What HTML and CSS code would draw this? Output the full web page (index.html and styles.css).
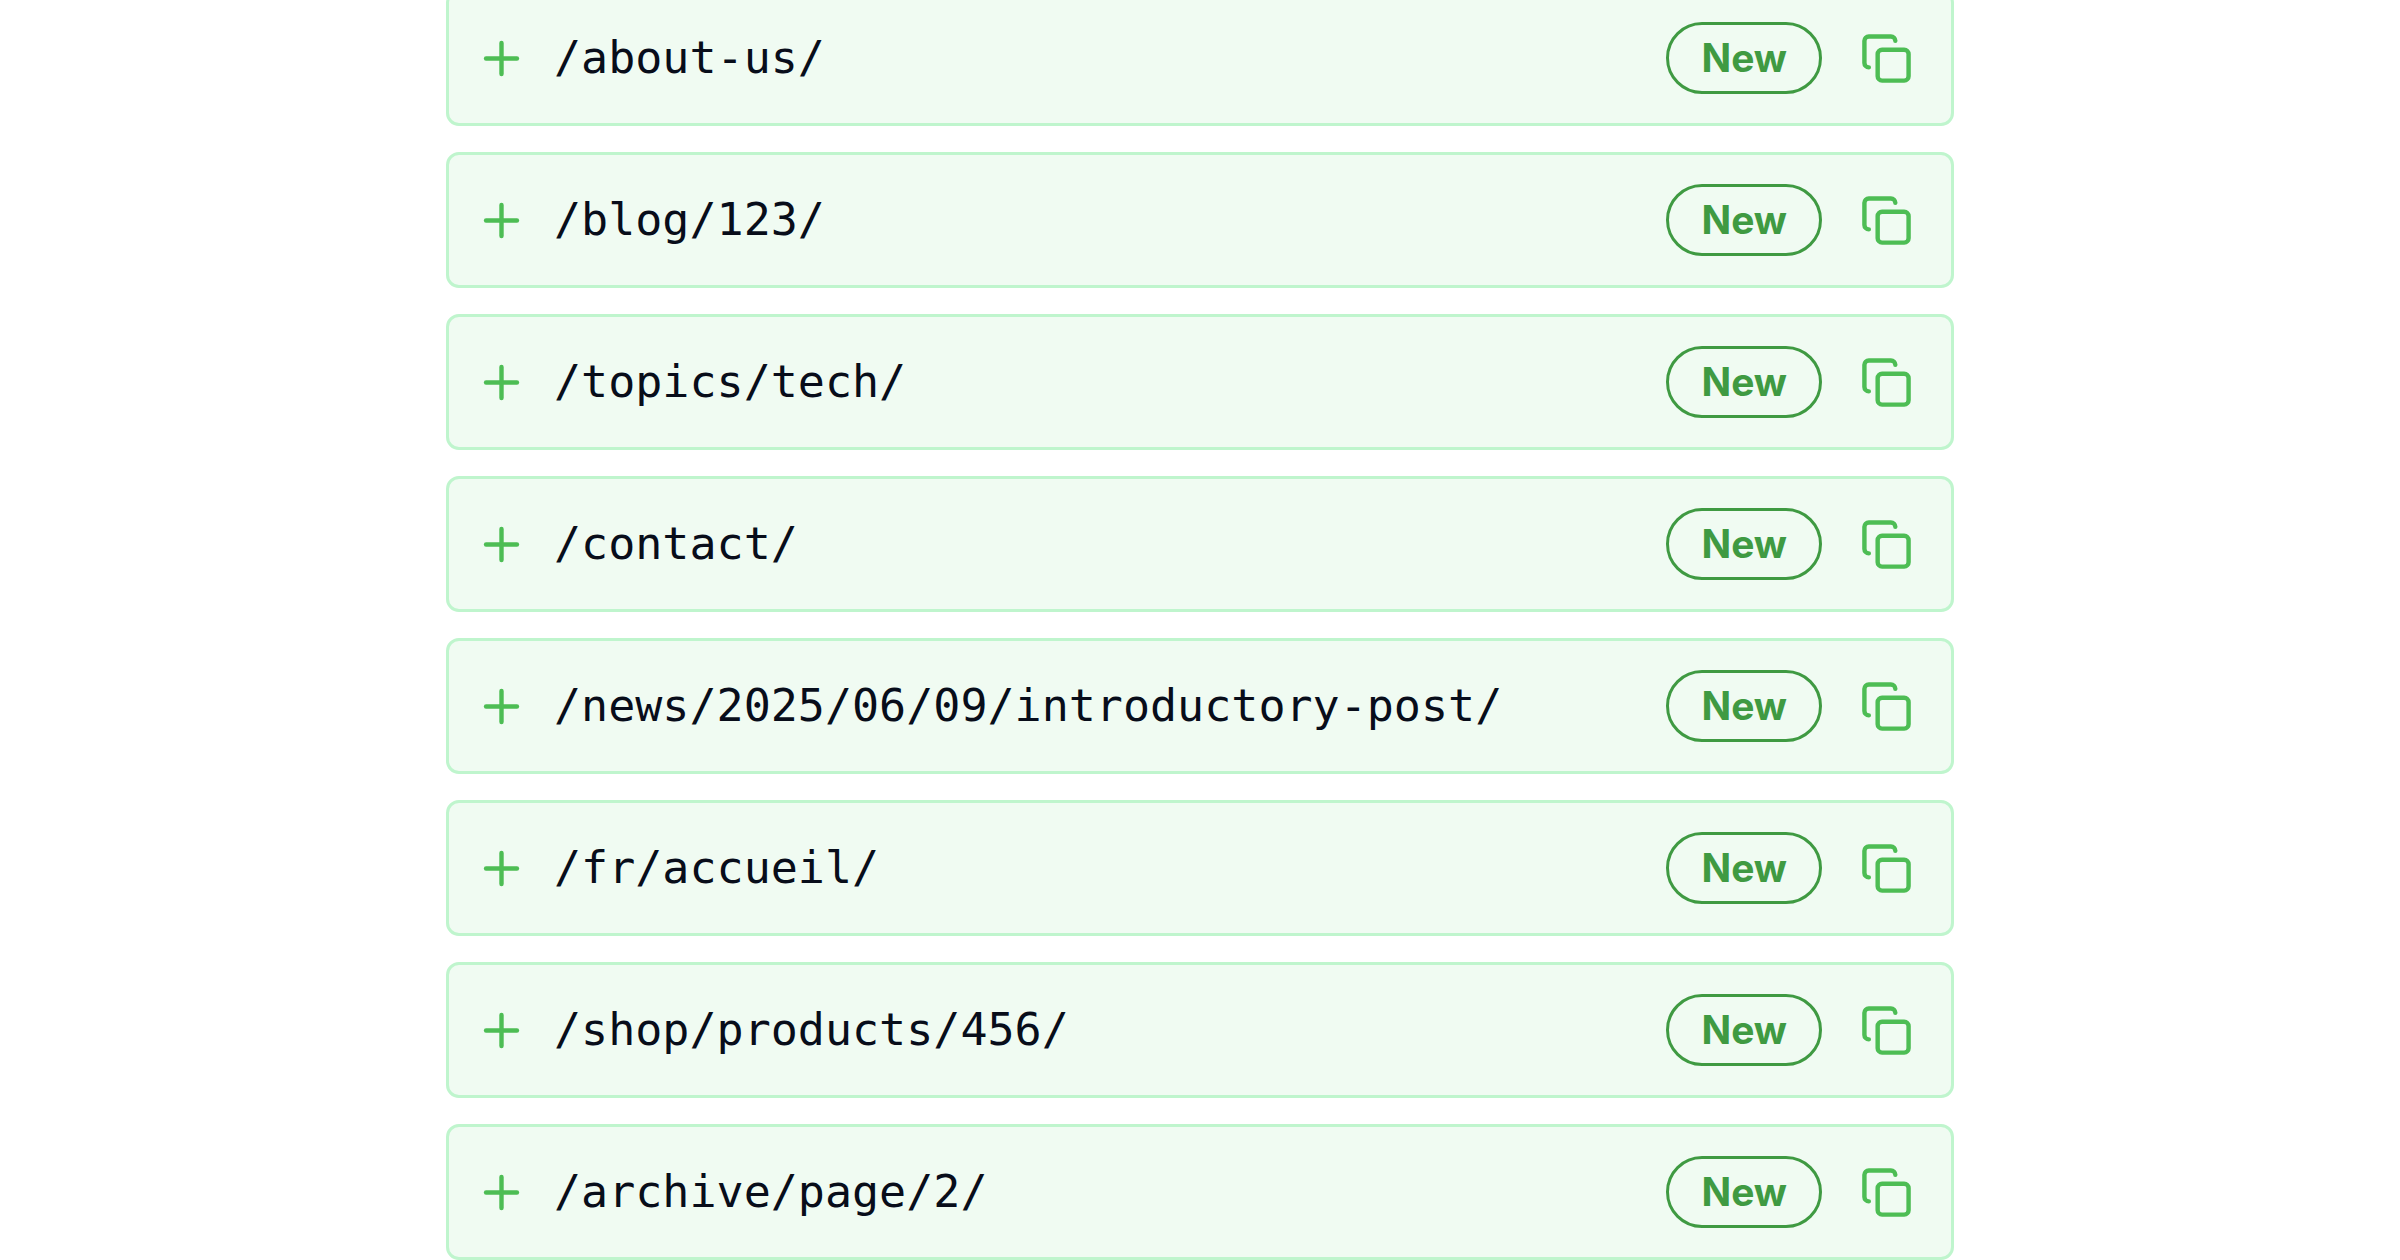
FILE: index.html
```html
<!DOCTYPE html>
<html lang="en">
<head>
    <meta charset="UTF-8">
    <meta name="viewport" content="width=device-width, initial-scale=1.0">
    <title>New Paths</title>
    <link rel="stylesheet" href="styles.css">
</head>
<body>
    <!-- Shared icons -->
    <svg class="icon-defs" aria-hidden="true">
        <symbol id="icon-plus" viewBox="0 0 24 24">
            <path d="M5 12h14"/>
            <path d="M12 5v14"/>
        </symbol>
        <symbol id="icon-copy" viewBox="0 0 24 24">
            <rect width="14" height="14" x="8" y="8" rx="2" ry="2"/>
            <path d="M4 16c-1.1 0-2-.9-2-2V4c0-1.1.9-2 2-2h10c1.1 0 2 .9 2 2"/>
        </symbol>
    </svg>

    <main class="container">
        <ul class="path-list">
            <li class="path-item">
                <svg class="icon" aria-hidden="true"><use href="#icon-plus"/></svg>
                <code class="path">/about-us/</code>
                <span class="badge">New</span>
                <button type="button" class="copy-btn" aria-label="Copy /about-us/"><svg class="icon"><use href="#icon-copy"/></svg></button>
            </li>
            <li class="path-item">
                <svg class="icon" aria-hidden="true"><use href="#icon-plus"/></svg>
                <code class="path">/blog/123/</code>
                <span class="badge">New</span>
                <button type="button" class="copy-btn" aria-label="Copy /blog/123/"><svg class="icon"><use href="#icon-copy"/></svg></button>
            </li>
            <li class="path-item">
                <svg class="icon" aria-hidden="true"><use href="#icon-plus"/></svg>
                <code class="path">/topics/tech/</code>
                <span class="badge">New</span>
                <button type="button" class="copy-btn" aria-label="Copy /topics/tech/"><svg class="icon"><use href="#icon-copy"/></svg></button>
            </li>
            <li class="path-item">
                <svg class="icon" aria-hidden="true"><use href="#icon-plus"/></svg>
                <code class="path">/contact/</code>
                <span class="badge">New</span>
                <button type="button" class="copy-btn" aria-label="Copy /contact/"><svg class="icon"><use href="#icon-copy"/></svg></button>
            </li>
            <li class="path-item">
                <svg class="icon" aria-hidden="true"><use href="#icon-plus"/></svg>
                <code class="path">/news/2025/06/09/introductory-post/</code>
                <span class="badge">New</span>
                <button type="button" class="copy-btn" aria-label="Copy /news/2025/06/09/introductory-post/"><svg class="icon"><use href="#icon-copy"/></svg></button>
            </li>
            <li class="path-item">
                <svg class="icon" aria-hidden="true"><use href="#icon-plus"/></svg>
                <code class="path">/fr/accueil/</code>
                <span class="badge">New</span>
                <button type="button" class="copy-btn" aria-label="Copy /fr/accueil/"><svg class="icon"><use href="#icon-copy"/></svg></button>
            </li>
            <li class="path-item">
                <svg class="icon" aria-hidden="true"><use href="#icon-plus"/></svg>
                <code class="path">/shop/products/456/</code>
                <span class="badge">New</span>
                <button type="button" class="copy-btn" aria-label="Copy /shop/products/456/"><svg class="icon"><use href="#icon-copy"/></svg></button>
            </li>
            <li class="path-item">
                <svg class="icon" aria-hidden="true"><use href="#icon-plus"/></svg>
                <code class="path">/archive/page/2/</code>
                <span class="badge">New</span>
                <button type="button" class="copy-btn" aria-label="Copy /archive/page/2/"><svg class="icon"><use href="#icon-copy"/></svg></button>
            </li>
        </ul>
    </main>
</body>
</html>
```
FILE: styles.css
```css
* {
    margin: 0;
    padding: 0;
    box-sizing: border-box;
}

body {
    font-family: Inter, 'Liberation Sans', sans-serif;
    color: #080d1a;
    background: #fff;
}

.icon-defs {
    display: none;
}

.container {
    max-width: 1508px;
    margin: -10px auto 0;
}

.path-list {
    display: flex;
    flex-direction: column;
    gap: 26px;
    list-style: none;
}

.path-item {
    display: flex;
    align-items: center;
    gap: 26px;
    padding: 29px 26px;
    background: #f0fbf2;
    border: 3px solid #bff5cd;
    border-radius: 13px;
}

.icon {
    display: block;
    flex-shrink: 0;
    width: 53px;
    height: 53px;
    fill: none;
    stroke: #4dbd54;
    stroke-width: 2;
    stroke-linecap: round;
    stroke-linejoin: round;
}

.path {
    flex: 1;
    min-width: 0;
    font-family: 'DejaVu Sans Mono', 'Liberation Mono', monospace;
    font-size: 45px;
    line-height: 60px;
    overflow-wrap: anywhere;
}

.badge {
    padding: 6px 32px;
    font-size: 39px;
    font-weight: 700;
    line-height: 54px;
    color: #3f9a42;
    border: 3px solid #3f9a42;
    border-radius: 36px;
}

.copy-btn {
    padding: 0 12px;
    background: none;
    border: none;
    cursor: pointer;
}

.copy-btn:hover {
    opacity: 0.7;
}
```
